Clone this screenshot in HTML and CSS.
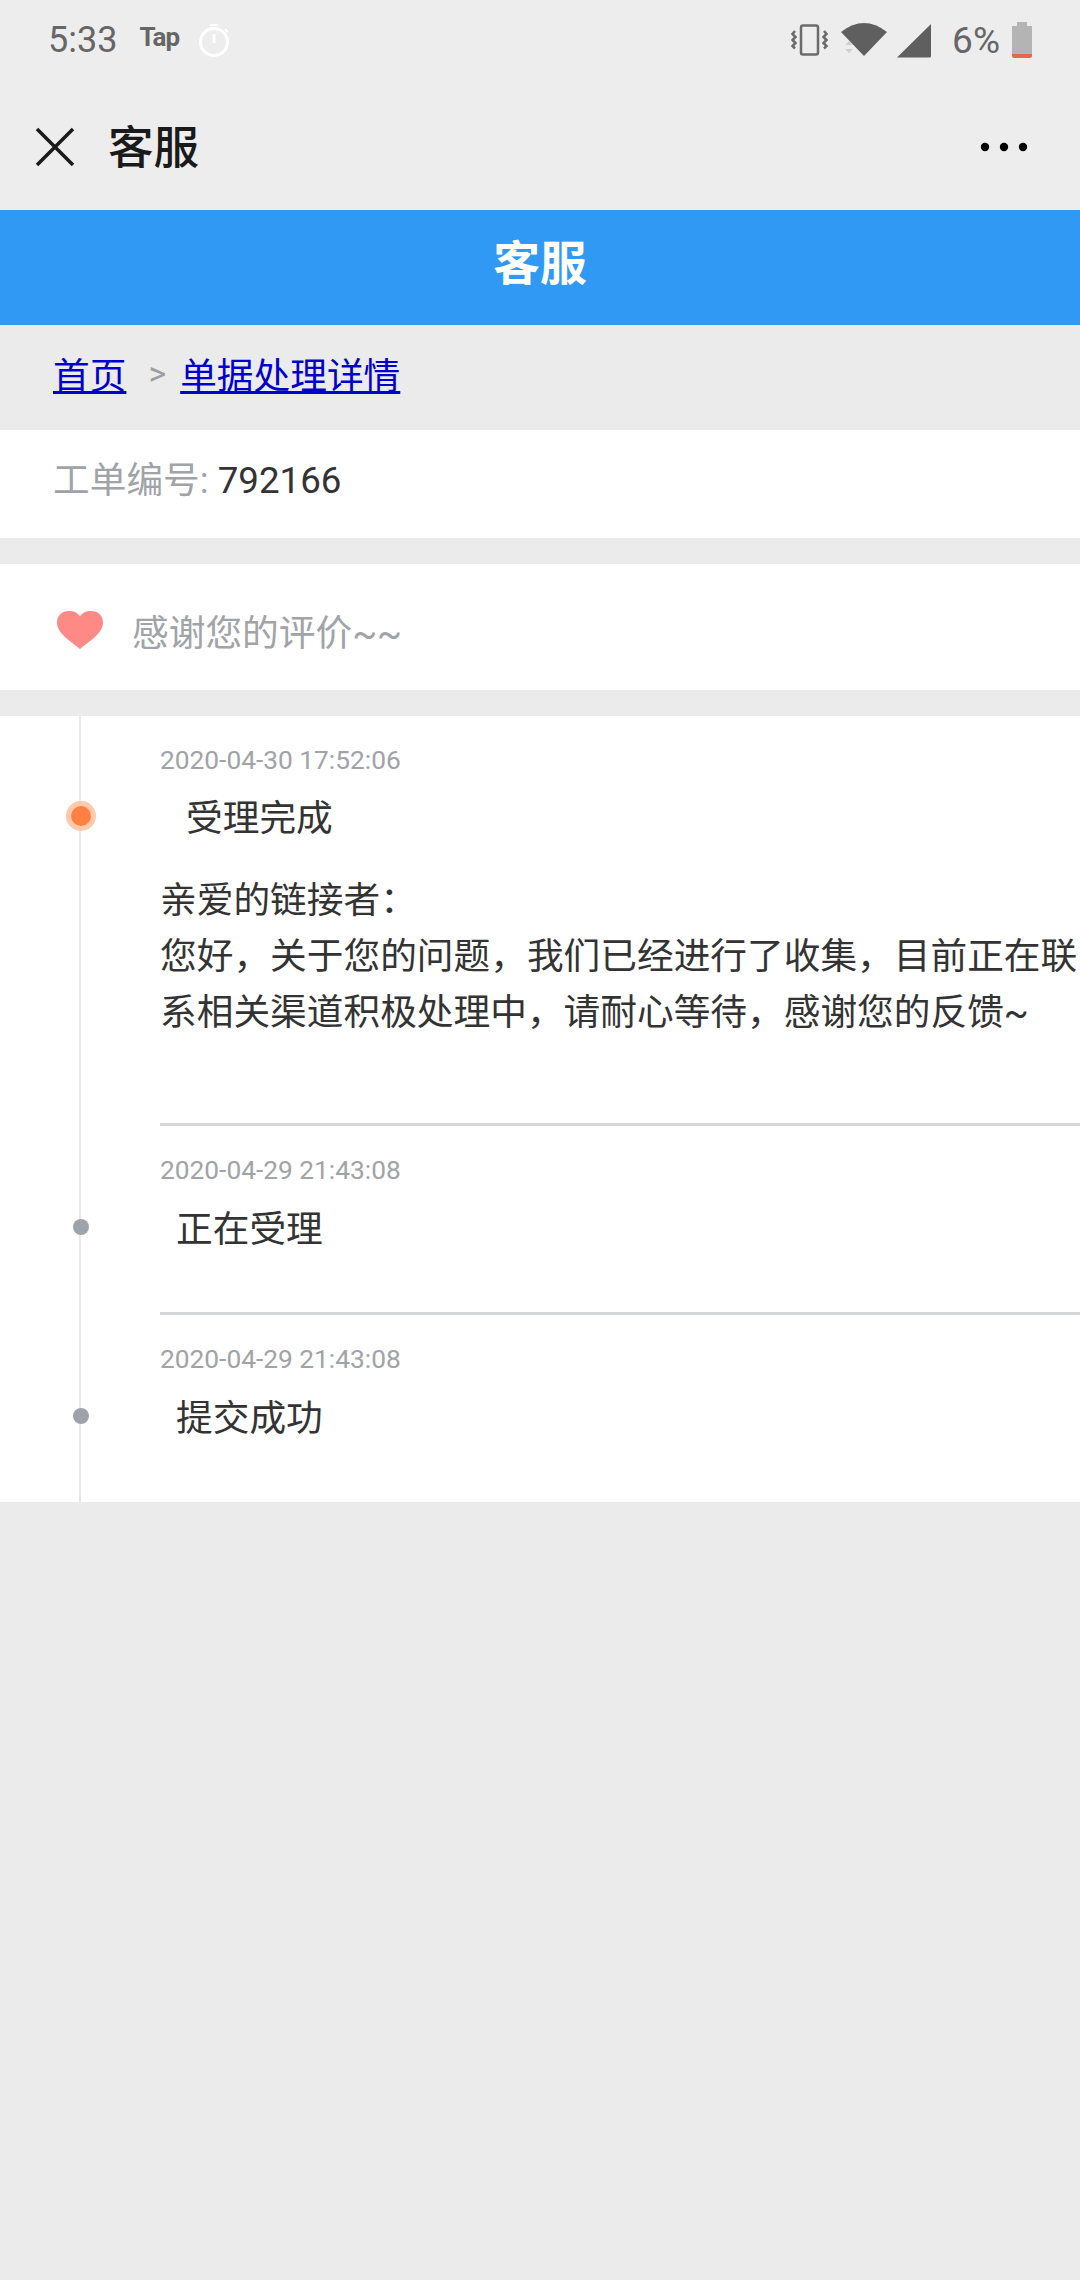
FILE: index.html
```html
<!DOCTYPE html>
<html lang="zh-CN">
<head>
    <meta charset="UTF-8">
    <meta name="viewport" content="width=device-width, initial-scale=1.0">
    <title>客服</title>
    <link rel="stylesheet" href="styles.css">
</head>
<body>

    <!-- Status Bar -->
    <div class="status-bar">
        <span class="status-time">5:33</span>
        <span class="status-tap">Tap</span>
        <svg class="icon-timer" width="32" height="34" viewBox="0 0 32 34">
            <circle cx="16" cy="19" r="13.5" fill="none" stroke="#fff" stroke-width="3"/>
            <path d="M12 2h8M27 6l3 3" stroke="#fff" stroke-width="2" fill="none"/>
            <path d="M16 11v9" stroke="#fff" stroke-width="3" fill="none"/>
        </svg>
        <div class="status-right">
            <svg class="icon-vibrate" width="38" height="32" viewBox="0 0 38 32">
                <rect x="10" y="1.5" width="17" height="29" rx="2" fill="none" stroke="#6b6b6b" stroke-width="2.5"/>
                <path d="M4 7l-2.500 3 3 3-3 3 3 3-3 3 2.500 2.500M33 7l2.500 3-3 3 3 3-3 3 3 3-2.500 2.500" fill="none" stroke="#6b6b6b" stroke-width="2.500"/>
            </svg>
            <svg class="icon-wifi" width="50" height="38" viewBox="0 0 50 38">
                <path d="M1 11Q24-7 47 11L24 35Z" fill="#5f5f5f"/>
                <path d="M5 24l4-4 4 4zM5 28h8l-4 4z" fill="#cfcfcf"/>
            </svg>
            <svg class="icon-signal" width="35" height="35" viewBox="0 0 35 35">
                <path d="M1 34.500L35 1V33a1.500 1.500 0 0 1-1.500 1.500Z" fill="#5f5f5f"/>
            </svg>
            <span class="status-percent">6%</span>
            <svg class="icon-battery" width="20" height="36" viewBox="0 0 20 36">
                <path d="M5 0h10v4h5v29H0V4h5z" fill="#b4b4b4"/>
                <path d="M0 32h20v2a2 2 0 0 1-2 2H2a2 2 0 0 1-2-2z" fill="#e2694a"/>
            </svg>
        </div>
    </div>

    <!-- Title Bar -->
    <header class="nav-bar">
        <svg class="icon-close" width="40" height="40" viewBox="0 0 40 40">
            <path d="M2 2L38 38M38 2L2 38" stroke="#1a1a1a" stroke-width="3.500" fill="none"/>
        </svg>
        <span class="nav-title">客服</span>
        <svg class="icon-more" width="48" height="10" viewBox="0 0 48 10">
            <circle cx="5" cy="5" r="4.200"/>
            <circle cx="24" cy="5" r="4.200"/>
            <circle cx="43" cy="5" r="4.200"/>
        </svg>
    </header>

    <div class="page-title">客服</div>

    <!-- Breadcrumb -->
    <nav class="breadcrumb">
        <a href="#">首页</a>
        <span class="breadcrumb-sep">&gt;</span>
        <a href="#">单据处理详情</a>
    </nav>

    <section class="order-no">
        <span class="order-label">工单编号:</span> <span class="order-value">792166</span>
    </section>

    <section class="thanks">
        <svg class="icon-heart" width="46" height="38" viewBox="0 0 46 38">
            <path d="M23 38C15 31 0 23 0 11.500 0 4.500 5 0 12 0 17 0 21 2 23 5.500 25 2 29 0 34 0 41 0 46 4.500 46 11.500 46 23 31 31 23 38Z" fill="#ff8985"/>
        </svg>
        <span>感谢您的评价~~</span>
    </section>

    <!-- Timeline -->
    <section class="timeline">
        <div class="timeline-item item-first">
            <i class="dot dot-active"></i>
            <div class="item-time">2020-04-30 17:52:06</div>
            <div class="item-title title-active">受理完成</div>
            <p class="item-text">亲爱的链接者：<br>您好，关于您的问题，我们已经进行了收集，目前正在联系相关渠道积极处理中，请耐心等待，感谢您的反馈~</p>
        </div>
        <div class="timeline-item">
            <i class="dot"></i>
            <div class="item-time">2020-04-29 21:43:08</div>
            <div class="item-title">正在受理</div>
        </div>
        <div class="timeline-item">
            <i class="dot"></i>
            <div class="item-time">2020-04-29 21:43:08</div>
            <div class="item-title">提交成功</div>
        </div>
    </section>

</body>
</html>
```

FILE: styles.css
```css
* {
    box-sizing: border-box;
}

body {
    margin: 0;
    height: 2280px;
    background-color: #ebebeb;
    font-family: Roboto, "Noto Sans CJK SC", sans-serif;
    font-size: 36.7px;
    color: #333;
    overflow: hidden;
}

/* Status Bar */
.status-bar {
    display: flex;
    align-items: center;
    height: 84px;
    padding: 0 48px 4px;
    background-color: #ededed;
    color: #666;
}

.status-time {
    font-size: 36px;
}

.status-tap {
    margin-left: 22px;
    margin-top: -6px;
    font-size: 26px;
    font-weight: 700;
    letter-spacing: -1px;
}

.icon-timer {
    margin-left: 19px;
}

.status-right {
    display: flex;
    align-items: center;
    margin-left: auto;
}

.icon-wifi {
    margin-left: 11px;
}

.icon-signal {
    margin-left: 6px;
}

.status-percent {
    margin-left: 21px;
    font-size: 37px;
}

.icon-battery {
    margin-left: 12px;
}

/* Title Bar */
.nav-bar {
    display: flex;
    align-items: center;
    height: 126px;
    padding: 0 52px 0 35px;
    background-color: #ededed;
}

.nav-title {
    margin: -7px 0 0 33px;
    font-size: 45.5px;
    font-weight: 500;
    color: #1a1a1a;
}

.icon-more {
    margin-left: auto;
}

.page-title {
    height: 115px;
    line-height: 109px;
    text-align: center;
    background-color: #3099f3;
    color: #fff;
    font-size: 46.7px;
    font-weight: 700;
}

/* Breadcrumb */
.breadcrumb {
    display: flex;
    align-items: center;
    height: 105px;
    padding: 0 0 9px 53px;
}

.breadcrumb a {
    color: #0000cc;
}

.breadcrumb-sep {
    margin: 0 14px 0 22px;
    color: #9a9da1;
    font-size: 34px;
}

.order-no {
    height: 108px;
    line-height: 102px;
    padding-left: 53px;
    background-color: #fff;
}

.order-label {
    color: #a0a3a7;
}

.thanks {
    display: flex;
    align-items: center;
    height: 126px;
    margin-top: 26px;
    padding: 5px 0 0 57px;
    background-color: #fff;
    color: #a0a3a7;
}

.icon-heart {
    margin-right: 29px;
}

/* Timeline */
.timeline {
    position: relative;
    margin-top: 26px;
    padding-left: 160px;
    background-color: #fff;
}

.timeline::before {
    content: "";
    position: absolute;
    left: 79px;
    top: 0;
    bottom: 0;
    width: 2px;
    background-color: #e8e8e8;
}

.timeline-item {
    position: relative;
    height: 189px;
    padding-top: 27px;
    border-bottom: 3px solid #d4d6d9;
}

.timeline-item:last-child {
    height: 187px;
    border-bottom: 0;
}

.item-first {
    height: 410px;
    padding-top: 27px;
}

.item-time {
    height: 34px;
    line-height: 34px;
    font-size: 26.3px;
    color: #a0a3a7;
}

.item-title {
    margin-top: 18px;
    padding-left: 16px;
    line-height: 50px;
}

.title-active {
    margin-top: 17px;
    padding-left: 26px;
}

.item-text {
    margin: 29px 0 0;
    line-height: 56px;
}

.dot {
    position: absolute;
    left: -87px;
    top: 93px;
    width: 16px;
    height: 16px;
    border-radius: 50%;
    background-color: #9ea3ab;
}

.dot-active {
    left: -89px;
    top: 90px;
    width: 20px;
    height: 20px;
    background-color: #ff8040;
    box-shadow: 0 0 0 5px #ffc9ab;
}
```
